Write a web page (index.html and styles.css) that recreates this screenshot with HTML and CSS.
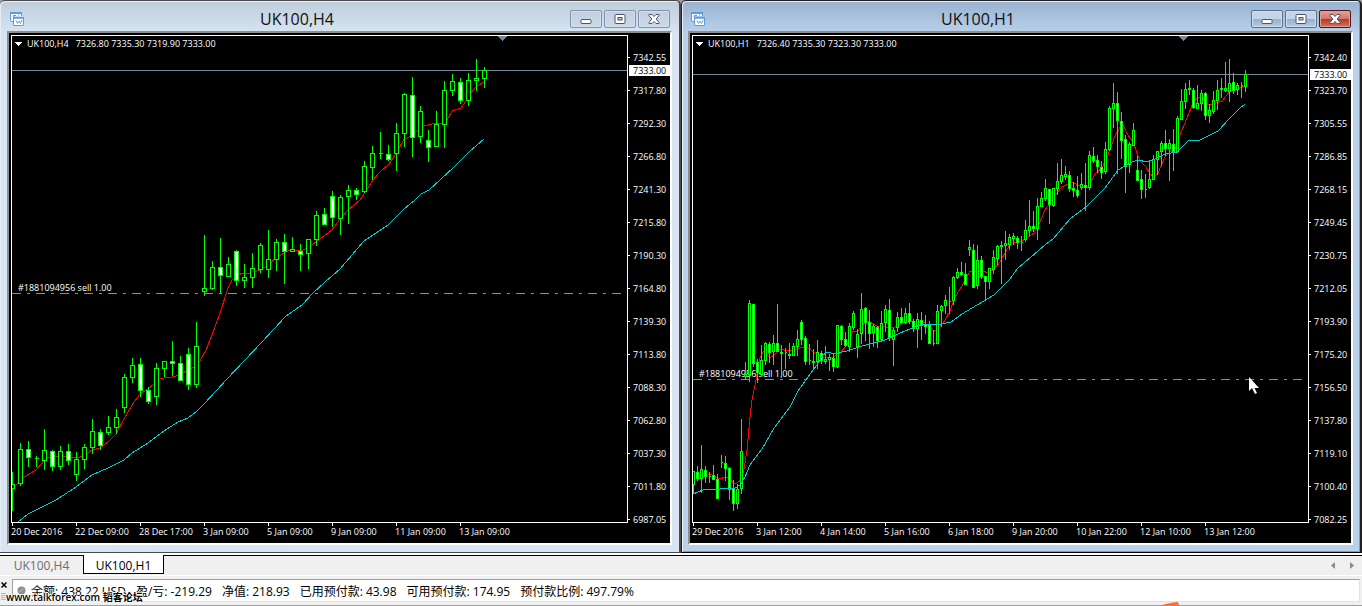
FILE: index.html
```html
<!DOCTYPE html>
<html lang="zh-CN">
<head>
<meta charset="utf-8">
<title>UK100 charts</title>
<link rel="stylesheet" href="styles.css">
</head>
<body>
<svg class="symbols" aria-hidden="true">
  <symbol id="i-chart" viewBox="0 0 14 14">
    <path d="M1 1h10v3H3v5H1z" fill="#f4f8fd" />
    <path d="M.5 1v7.500q0 1 1 1H3M11.500 1v3" fill="none" stroke="#5b9be0" />
    <path d="M0 1h12" stroke="#5b9be0" stroke-width="2" />
    <path d="M3 5l1-2 1 1 1-1M8 3h1" fill="none" stroke="#5b9be0" />
    <rect x="3.500" y="5.500" width="10" height="8" rx=".5" fill="#fff" stroke="#5b9be0" />
    <path d="M3 6h11" stroke="#5b9be0" stroke-width="1.500" />
    <path d="M6 8.500l1.500 3L9 9l1.500 2.500L12 8" fill="none" stroke="#4f7fc8" stroke-width=".8" />
  </symbol>
  <symbol id="i-min" viewBox="0 0 12 10"><rect x="1" y="5.500" width="10" height="4" rx="1" fill="#fff" stroke="#4c5369" /></symbol>
  <symbol id="i-max" viewBox="0 0 12 10"><rect x="1" y=".5" width="10" height="9" rx="1" fill="#fff" stroke="#4c5369" /><rect x="4" y="3.500" width="4" height="2.500" fill="#b9c8dc" stroke="#4c5369" /></symbol>
  <symbol id="i-close" viewBox="0 0 12 10"><path d="M1 .5h3l2 2 2-2h3v1L8.200 5 11 8.500v1H8l-2-2-2 2H1v-1L3.800 5 1 1.500z" fill="#fff" stroke="#4c5369" /></symbol>
</svg>
<main class="workspace">
  <section class="window" aria-label="UK100,H4">
    <header class="titlebar">
      <svg class="app-icon"><use href="#i-chart" /></svg>
      <h1 class="title">UK100,H4</h1>
      <div class="controls">
        <button class="control" aria-label="Minimize"><svg class="glyph"><use href="#i-min" /></svg></button>
        <button class="control" aria-label="Maximize"><svg class="glyph"><use href="#i-max" /></svg></button>
        <button class="control" aria-label="Close"><svg class="glyph"><use href="#i-close" /></svg></button>
      </div>
    </header>
    <div class="chart" id="h4">
      <div class="plot"></div>
      <ul class="prices"></ul>
      <ul class="times"></ul>
    </div>
  </section>
  <section class="window active" aria-label="UK100,H1">
    <header class="titlebar">
      <svg class="app-icon"><use href="#i-chart" /></svg>
      <h1 class="title">UK100,H1</h1>
      <div class="controls">
        <button class="control" aria-label="Minimize"><svg class="glyph"><use href="#i-min" /></svg></button>
        <button class="control" aria-label="Maximize"><svg class="glyph"><use href="#i-max" /></svg></button>
        <button class="control close" aria-label="Close"><svg class="glyph"><use href="#i-close" /></svg></button>
      </div>
    </header>
    <div class="chart" id="h1">
      <div class="plot"></div>
      <ul class="prices"></ul>
      <ul class="times"></ul>
    </div>
  </section>
</main>
<nav class="tabs">
  <button class="tab">UK100,H4</button>
  <button class="tab selected">UK100,H1</button>
  <span class="scrollers">
    <button class="scroller" aria-label="Scroll left"><svg width="4" height="7"><path d="M4 0v7L0 3.500z" fill="#8a8a8a" /></svg></button>
    <button class="scroller" aria-label="Scroll right"><svg width="4" height="7"><path d="M0 0v7l4-3.500z" fill="#8a8a8a" /></svg></button>
  </span>
</nav>
<footer class="terminal">
  <div class="grip">
    <button class="grip-close" aria-label="Close"><svg width="6" height="6"><path d="M.5.5l5 5M5.500.5l-5 5" stroke="#000" stroke-width="1.500" /></svg></button>
    <svg width="5" height="9"><path d="M0 1.500h5M0 3.500h5M0 5.500h5M0 7.500h5" stroke="#b5b5b5" /></svg>
  </div>
  <div class="summary">
    <svg class="state" width="9" height="9"><circle cx="4.500" cy="4.500" r="4" fill="#8f8f8f" /><path d="M2 6.500l4-4" stroke="#c8c8c8" /></svg>
    <span>余额: 438.22 USD</span>
    <span>盈/亏: -219.29</span>
    <span>净值: 218.93</span>
    <span>已用预付款: 43.98</span>
    <span>可用预付款: 174.95</span>
    <span>预付款比例: 497.79%</span>
  </div>
  <span class="watermark">www.talkforex.com 韬客论坛</span>
  <svg class="flame" width="20" height="4"><path d="M0 4Q5 1.500 17 0q2 0 2 4z" fill="#f9703f" /></svg>
</footer>
<svg class="pointer" width="12" height="18"><path d="M1 0v14l3-3 3 6 2-1-2.500-5H11z" fill="#fff" /></svg>
<script src="charts.js"></script>
</body>
</html>
```
FILE: styles.css
```css
* { box-sizing: border-box; }

body {
  margin: 0;
  min-height: 100vh;
  display: flex;
  flex-direction: column;
  overflow: hidden;
  background: #f0f0f0;
  font-family: "Open Sans", "Noto Sans", "Noto Sans CJK SC", sans-serif;
  font-size: 12px;
  position: relative;
}

ul { list-style: none; margin: 0; padding: 0; }
button { font: inherit; margin: 0; padding: 0; }
.symbols { position: absolute; width: 0; height: 0; }

.workspace { flex: 1; display: flex; background: #a0a0a0; }

.window {
  flex: 1;
  min-width: 0;
  display: flex;
  flex-direction: column;
  padding: 0 7px 7px 7px;
  border: solid #4a4a4e;
  border-width: 1px 2px 1px 0;
  border-radius: 5px 5px 0 0;
  background: linear-gradient(#bfccda, #d7e4f2 32px);
  box-shadow: inset 1px 1px #e6edf5;
}
.window.active {
  padding-left: 6px;
  border-color: #202024;
  border-left-width: 1px;
  border-bottom-color: #000;
  background: linear-gradient(#98b2d0, #b9d1ea 32px);
  box-shadow: inset 1px 1px #e6edf5, inset -1px -1px #36bcd0;
}

.titlebar { display: flex; align-items: center; height: 30px; padding: 5px 2px 0 3px; }
.app-icon { width: 14px; height: 14px; }
.title { flex: 1; margin: 0; text-align: center; font-size: 16px; font-weight: 400; line-height: 20px; color: #111; }
.controls { display: flex; gap: 2px; }
.control {
  width: 32px;
  height: 18px;
  display: grid;
  place-items: center;
  border: 1px solid #8391ae;
  border-radius: 2px;
  background: linear-gradient(#c3d0df, #cbd8e6);
  box-shadow: inset 0 0 0 1px #d3dfeb;
}
.active .control {
  border-color: #5c6f8f;
  background: linear-gradient(#c3d4e8 50%, #97afcb 50%, #b5cce6);
  box-shadow: inset 0 0 0 1px #cfdeee;
}
.active .close {
  border-color: #4d1521;
  background: linear-gradient(#e3a297, #d17567 50%, #b53825 50%, #d3725a);
  box-shadow: inset 0 0 0 1px #e0a195;
}
.glyph { width: 12px; height: 10px; }

.chart {
  flex: 1;
  display: grid;
  grid-template-columns: 1fr 42px;
  grid-template-rows: 1fr 20px;
  padding: 2px 0 0 2px;
  border: 2px solid;
  border-color: #8d8d8d #fff #fff #8d8d8d;
  background: #000;
  color: #fff;
  font-size: 9px;
  line-height: 12px;
}
.plot { position: relative; min-width: 0; border: 1px solid #fff; }
.canvas { position: absolute; inset: 0; width: 100%; height: 100%; shape-rendering: crispEdges; }
.canvas text { fill: #fff; white-space: pre; }
.wick { stroke: #0f0; }
.candle { stroke: #0f0; fill: #000; }
.candle.down { fill: #fff; }
.ma-fast { stroke: #f00; fill: none; }
.ma-slow { stroke: #00cdcd; fill: none; }
.price-line { stroke: #778899; }
.order-line { stroke: #32cd32; stroke-dasharray: 9 6 3 6; }

.prices { grid-row: 1 / 3; grid-column: 2; padding-top: 6px; position: relative; }
.price { display: flex; align-items: center; gap: 3px; height: 33px; }
.price::before { content: ""; width: 2px; height: 1px; background: #fff; }
.quote { position: absolute; left: 1px; right: 0; padding-left: 4px; line-height: 11px; background: #fff; color: #000; }

.times { display: flex; overflow: hidden; }
.time { flex: 0 0 64px; white-space: nowrap; }
.time::before { content: ""; display: block; width: 1px; height: 3px; margin-left: 1px; background: #fff; }

.tabs {
  display: flex;
  height: 20px;
  margin-top: 2px;
  border-top: 1px solid #000;
  box-shadow: 0 -2px #fff;
}
.tab { width: 81px; height: 19px; border: 0; background: none; color: #6d6d6d; }
.tab:first-child { width: 83px; }
.tab.selected {
  margin-top: -1px;
  padding-top: 2px;
  background: #fff;
  color: #000;
  border: solid #000;
  border-width: 0 1px 1px;
}
.scrollers { display: flex; gap: 15px; align-items: center; margin-left: auto; padding-right: 8px; }
.scroller { display: flex; border: 0; background: none; }

.terminal { position: relative; display: flex; padding: 3px 2px 3px 0; border-top: 1px solid #fff; border-bottom: 1px solid #a0a0a0; }
.grip { width: 12px; padding: 3px 1px 0; display: flex; flex-direction: column; gap: 4px; }
.grip-close { border: 0; background: none; height: 6px; display: flex; }
.grip svg { display: block; }
.summary {
  flex: 1;
  display: flex;
  align-items: center;
  gap: 10px;
  height: 23px;
  padding-left: 4px;
  background: #fff;
  border: 1px solid #e3e3e3;
  border-color: #a0a0a0 #e3e3e3 #e3e3e3 #a0a0a0;
  white-space: nowrap;
}
.state { margin-right: -5px; }
.watermark {
  position: absolute;
  left: 6px;
  bottom: 1px;
  font-size: 10px;
  font-weight: 600;
  line-height: 14px;
  text-shadow: 1px 0 #fff, -1px 0 #fff, 0 1px #fff, 0 -1px #fff;
}
.flame { position: absolute; right: 182px; bottom: -1px; }
.pointer { position: absolute; left: 1248px; top: 377px; }
```
FILE: charts.js
```js
// Each bar: high, body top, body bottom, low, and 1 for a falling bar.
const charts = {
  h4: {
    origin: 12, step: 8, half: 2, lineY: 70, orderY: 293, left: 12,
    info: ["UK100,H4", "7326.80 7335.30 7319.90 7333.00"],
    prices: "7342.55 7317.80 7292.30 7266.80 7241.30 7215.80 7190.30 7164.80 7139.30 7113.80 7088.30 7062.80 7037.30 7011.80 6987.05",
    times: "20 Dec 2016|22 Dec 09:00|28 Dec 17:00|3 Jan 09:00|5 Jan 09:00|9 Jan 09:00|11 Jan 09:00|13 Jan 09:00",
    bars: `472 484 489 511|443 449 484 486|441 449 458 467 1|456 458 459 467|429 450 461 470|450 451 467 471 1|446 451 467 470|444 451 461 465 1|452 459 475 481|444 447 460 469|419 431 448 454|429 432 446 450 1|416 427 433 435|409 417 428 434|374 377 408 413|358 365 378 383|358 364 391 397 1|387 390 402 404 1|363 368 397 405|361 361 369 377|341 361 364 376 1|356 363 381 381 1|348 354 385 390 1|322 346 385 388|235 288 292 296|261 267 289 290|238 267 276 293 1|257 264 277 277|250 251 281 286 1|264 277 281 288|253 268 278 288|243 245 270 273|230 259 270 278|239 242 260 271|234 242 252 284 1|237 249 252 252|244 251 255 271 1|239 239 254 269|211 215 240 246|208 214 225 225 1|191 196 218 227 1|195 197 219 235|185 190 197 224|188 190 195 200 1|161 166 192 193|146 153 168 180|132 153 154 159|145 154 160 161 1|123 133 154 171|93 94 134 147|77 95 138 157 1|106 111 137 143|130 140 148 162 1|111 124 147 147|81 90 125 148|74 81 91 96|78 82 101 104 1|73 80 101 106|59 78 81 91|67 70 79 88`,
    fast: "12,490 16,485 24,477 36,470 46,458 52,457 60,456 76,458 84,456 92,450 100,448 108,442 116,434 124,419 132,405 140,394 148,389 160,379 168,377 172,377 180,375 186,371 194,367 200,361 206,350 212,335 220,313 228,288 232,280 237,275 244,273 252,273 260,270 268,265 276,258 284,253 290,250 300,251 308,248 316,242 324,236 332,230 340,219 348,210 360,200 373,180 380,172 389,164 397,152 404,139 412,136 418,130 424,126 432,124 442,123 447,120 452,111 461,108 468,98 473,90 477,86 484,82",
    slow: "18,522 28,514 44,506 56,500 76,487 92,475 108,468 124,460 132,453 148,443 164,431 178,422 188,418 196,412 204,404 217,390 226,380 245,360 262,342 286,316 302,305 313,293 325,282 340,269 364,241 388,225 404,209 415,200 421,194 429,190 440,180 454,167 469,152 477,145 484,139"
  },
  h1: {
    origin: 693, step: 4, half: 1, lineY: 74, orderY: 379, left: 693,
    info: ["UK100,H1", "7326.40 7335.30 7323.30 7333.00"],
    prices: "7342.40 7323.70 7305.55 7286.85 7268.15 7249.45 7230.75 7212.05 7193.90 7175.20 7156.50 7137.80 7119.10 7100.40 7082.25",
    times: "29 Dec 2016|3 Jan 12:00|4 Jan 14:00|5 Jan 16:00|6 Jan 18:00|9 Jan 20:00|10 Jan 22:00|12 Jan 10:00|13 Jan 12:00",
    bars: `471 471 485 493|466 472 479 481 1|445 469 479 493|466 470 477 483 1|472 476 477 483|465 475 480 480 1|474 479 499 499 1|455 462 463 468|456 463 469 481 1|467 468 490 500 1|480 488 504 511 1|484 489 504 509|419 451 489 494|362 374 377 380|300 303 375 382|304 304 364 367 1|359 362 373 383 1|345 360 375 375|342 343 361 365|342 344 353 363 1|335 343 352 365|304 343 352 352 1|345 352 354 378|348 352 353 369|343 354 356 359|343 346 356 356|330 339 347 356|320 322 340 345 1|336 338 362 365 1|344 360 361 365|349 361 363 369|340 352 362 369|351 353 361 364 1|346 359 362 364|354 357 360 371|354 358 367 372 1|325 325 367 368|325 326 340 345 1|332 339 346 347 1|323 326 347 352|311 313 328 330|329 334 347 358|293 309 334 344|307 308 323 341 1|310 322 334 349 1|324 326 333 347|326 327 341 348 1|311 323 340 342|305 309 323 332|299 310 338 341 1|328 330 340 366|312 317 328 332|308 317 323 324 1|308 313 323 324|303 313 322 324 1|319 321 329 332 1|313 319 329 348|312 320 326 340 1|315 324 327 334 1|321 325 344 344 1|330 343 344 346|305 311 344 344|305 306 311 327|295 300 306 314|287 301 302 314|276 277 301 305|268 272 278 279|262 272 275 276 1|263 274 285 285 1|240 247 250 256|244 250 288 288 1|245 260 286 289|256 260 277 279 1|276 276 282 300 1|268 268 282 289|250 257 270 274|245 246 259 265|241 245 247 284|231 243 246 260|234 237 245 250|233 236 239 245|236 238 243 249 1|236 242 243 251|220 230 240 242|200 226 231 236|211 226 229 232 1|198 206 229 240|192 198 207 207|179 188 199 201|189 189 205 224 1|188 188 206 207|163 181 189 195|159 175 182 184|166 174 177 180|171 175 189 192 1|182 188 191 197 1|176 190 196 198 1|173 184 188 190|163 185 188 211 1|151 155 188 190|147 156 161 163 1|155 160 167 173 1|161 167 173 179 1|142 149 172 174|106 108 150 151|83 103 109 128|92 103 121 174 1|112 121 141 159 1|135 139 167 193 1|142 144 165 173|123 130 146 146|156 170 181 181 1|170 179 190 199 1|174 189 190 198|160 179 188 189|155 159 180 180|151 151 160 175|141 143 152 166|130 143 149 156 1|139 143 149 181|129 144 152 171 1|116 118 152 153|89 101 120 120|83 89 102 109|80 88 90 95|88 90 108 109 1|85 103 109 109|90 93 104 111|92 93 116 120 1|104 110 116 123|91 100 112 114|80 90 101 110|78 88 90 98|62 88 91 92|59 83 92 102|73 82 91 94 1|83 85 90 95|82 85 86 98|70 74 87 92`,
    fast: "697,480 701,478 710,474 719,479 726,477 731,480 733,483 737,483 741,480 744,469 747,450 750,417 752,400 756,380 760,358 763,352 765,350 767,355 770,358 775,354 780,349 788,351 795,350 802,347 808,348 815,353 823,357 833,357 840,353 847,345 853,331 858,331 865,322 868,321 877,326 893,328 897,326 903,322 907,323 913,321 920,321 925,323 930,328 935,331 940,327 945,320 950,311 955,297 962,286 966,278 970,271 975,272 983,271 988,273 994,269 1000,262 1007,249 1012,243 1022,241 1028,237 1034,233 1040,222 1045,210 1050,203 1055,195 1062,187 1072,182 1078,185 1083,188 1088,187 1095,174 1102,168 1108,155 1114,138 1120,127 1123,125 1128,135 1133,142 1140,161 1146,167 1150,174 1154,177 1158,173 1165,157 1170,152 1177,147 1179,137 1187,118 1193,103 1198,97 1203,98 1208,105 1213,104 1222,101 1230,91 1240,88 1245,86",
    slow: "693,494 703,490 720,489 735,488 740,485 745,477 750,465 762,449 774,428 790,407 798,391 808,377 817,365 820,360 823,355 828,352 834,354 842,352 847,351 862,346 885,340 900,333 920,325 927,324 937,325 951,322 962,314 977,305 994,295 1010,279 1017,269 1045,245 1053,239 1070,219 1087,206 1105,188 1118,170 1130,163 1137,160 1148,162 1155,159 1165,154 1177,152 1182,147 1188,141 1200,140 1218,131 1230,118 1240,108 1245,104"
  }
};

for (const [id, c] of Object.entries(charts)) {
  const root = document.getElementById(id);
  const x0 = c.left;
  const candles = c.bars.split("|").map((row, i) => {
    const [high, top, bottom, low, down] = row.split(" ").map(Number);
    const x = c.origin + i * c.step + 0.5;
    const w = c.half * 2;
    return `<path class="wick" d="M${x} ${high}V${low}"/>` +
      `<path class="candle${down ? " down" : ""}" d="M${x - c.half} ${top + 0.5}h${w}v${bottom - top - 1}h${-w}z"/>`;
  }).join("");
  root.querySelector(".plot").innerHTML = `
    <svg class="canvas"><g transform="translate(${-x0} -36)">
      <path d="M${x0 + 3} 42h7l-3.500 4z" fill="#fff"/>
      <text x="${x0 + 15}" y="47">${c.info.join("   ")}</text>
      <path d="M${x0 + 486} 36h9l-4.500 5z" fill="#778899"/>
      <text x="${x0 + 6}" y="${c.orderY - 2}">#1881094956 sell 1.00</text>
      <path class="order-line" d="M${x0} ${c.orderY + 0.5}h4000"/>
      <path class="price-line" d="M${x0} ${c.lineY + 0.5}h4000"/>
      <polyline class="ma-fast" points="${c.fast}"/>
      ${candles}
      <polyline class="ma-slow" points="${c.slow}"/>
    </g></svg>`;
  root.querySelector(".prices").innerHTML =
    c.prices.split(" ").map(p => `<li class="price">${p}</li>`).join("") +
    `<li class="quote" style="top:${c.lineY - 40}px">7333.00</li>`;
  root.querySelector(".times").innerHTML =
    c.times.split("|").map(t => `<li class="time">${t}</li>`).join("");
}
```
